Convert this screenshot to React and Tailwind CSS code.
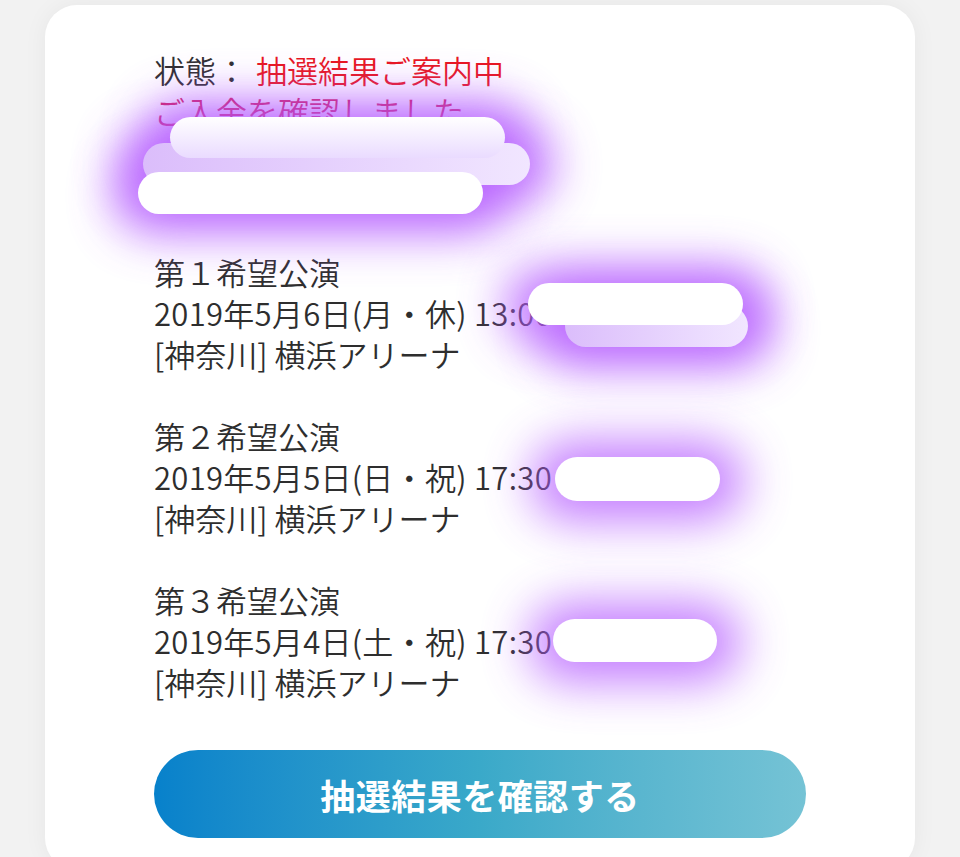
import React from 'react';

const shows = [
  { rank: '第１希望公演', date: '2019年5月6日(月・休) 13:00', venue: '[神奈川] 横浜アリーナ' },
  { rank: '第２希望公演', date: '2019年5月5日(日・祝) 17:30', venue: '[神奈川] 横浜アリーナ' },
  { rank: '第３希望公演', date: '2019年5月4日(土・祝) 17:30', venue: '[神奈川] 横浜アリーナ' },
];

// white marker strokes with a purple glow, drawn over the card
function Redaction({ pills }) {
  return (
    <>
      {pills.map((p, i) => (
        <div
          key={'g' + i}
          className="absolute rounded-full bg-[#b55cff] blur-[24px] opacity-80"
          style={{ left: p.x - 24, top: p.y - 16, width: p.w + 48, height: p.h + 36 }}
        />
      ))}
      {pills.map((p, i) => (
        <div
          key={'p' + i}
          className={`absolute rounded-full ${p.tint ? 'bg-gradient-to-r from-[#dbbdfb] to-[#f1e6ff]' : p.soft ? 'bg-gradient-to-b from-white to-[#eadbff]' : 'bg-white'}`}
          style={{ left: p.x, top: p.y, width: p.w, height: p.h }}
        />
      ))}
    </>
  );
}

export default function App() {
  return (
    <div className="min-h-screen bg-[#f2f2f2] pt-[5px] overflow-hidden" style={{ fontFamily: '"Noto Sans CJK JP", "Noto Sans", sans-serif' }}>
      <div className="relative mx-[45px] bg-white rounded-[32px] shadow-[0_0_24px_rgba(0,0,0,0.05)] px-[109px] pt-[44px] pb-[32px] text-[#2e2e2e] text-[31px] leading-[41px] font-[350]">
        <div>
          <div>
            状態：<span className="ml-[9px] text-[#e8151d]">抽選結果ご案内中</span>
          </div>
          <div className="text-[#d3134c]">ご入金を確認しました</div>
          <div className="h-[82px]" />
        </div>

        <div className="mt-[38px] flex flex-col gap-[41px]">
          {shows.map((s) => (
            <div key={s.rank}>
              <div>{s.rank}</div>
              <div className="whitespace-nowrap tracking-[0.3px]">{s.date}</div>
              <div>{s.venue}</div>
            </div>
          ))}
        </div>

        <button
          type="button"
          className="mt-[48px] w-full h-[88px] rounded-full bg-gradient-to-r from-[#0781cb] via-[#3aa9c9] to-[#75c3d5] text-white font-bold text-[35px] tracking-[0.5px]"
        >
          抽選結果を確認する
        </button>

        <Redaction
          pills={[
            { x: 98, y: 138, w: 387, h: 42, tint: true },
            { x: 125, y: 112, w: 335, h: 41, soft: true },
            { x: 93, y: 167, w: 345, h: 42 },
          ]}
        />
        <Redaction
          pills={[
            { x: 520, y: 300, w: 183, h: 42, tint: true },
            { x: 483, y: 278, w: 215, h: 42 },
          ]}
        />
        <Redaction pills={[{ x: 510, y: 452, w: 165, h: 44 }]} />
        <Redaction pills={[{ x: 508, y: 614, w: 164, h: 43 }]} />
      </div>
    </div>
  );
}
